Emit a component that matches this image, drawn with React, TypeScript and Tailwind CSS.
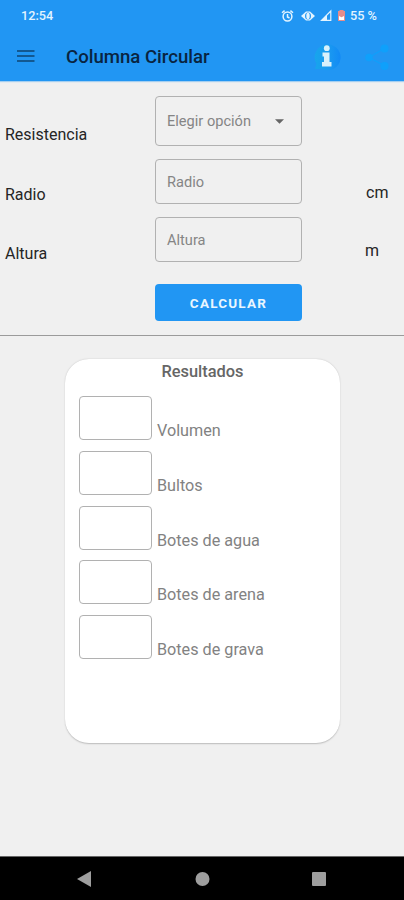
import type { ReactNode } from 'react';

const results = ['Volumen', 'Bultos', 'Botes de agua', 'Botes de arena', 'Botes de grava'];

function StatusIcons() {
    return (
        <svg width="67" height="16" viewBox="0 0 67 16" fill="none" className="text-[#e3f4ff]">
            {/* alarm */}
            <g stroke="currentColor" strokeWidth="1.5">
                <circle cx="6.5" cy="8.5" r="4.4" />
                <path d="M6.5 6v3l2 1M1 4.8l2.6-2.2M12 4.8L9.4 2.6" />
            </g>
            {/* eye */}
            <path d="M20 8l5-4.6h4L34 8l-5 4.6h-4z" fill="currentColor" />
            <ellipse cx="27" cy="8" rx="3" ry="3.6" fill="#2196f3" />
            <ellipse cx="27" cy="8" rx="1.7" ry="3.2" fill="currentColor" />
            {/* signal */}
            <path d="M40.5 12.3L49.8 3v9.3z" stroke="currentColor" strokeWidth="1.2" />
            <path d="M40.5 12.3l5.5-5.5v5.5z" fill="currentColor" />
            {/* battery */}
            <path d="M58.5 2h4v1h1.5v10h-7V3h1.5z" fill="#e58d8c" />
            <path d="M58 8l2.5 1.2L63 8v4h-5z" fill="#fff" />
        </svg>
    );
}

function InfoIcon() {
    return (
        <svg width="28" height="28" viewBox="0 0 28 28">
            <defs>
                <linearGradient id="info" x1="0" x2="1">
                    <stop offset="0" stopColor="#17a5ec" />
                    <stop offset=".5" stopColor="#1b9bf0" />
                    <stop offset="1" stopColor="#128af5" />
                </linearGradient>
            </defs>
            <path d="M2 26l1.5-5A13 13 0 1 1 9 26z" fill="url(#info)" />
            <circle cx="13.8" cy="5.2" r="2.9" fill="#d8f1fb" />
            <path d="M9.5 9.5h7V19h2v4.5H9V19h2v-5.5H9.5z" fill="#d8f1fb" />
        </svg>
    );
}

function ShareIcon() {
    return (
        <svg width="28" height="28" viewBox="0 0 28 28" fill="#0fa0fb">
            <path d="M5 14.5L21 5M5 14.5L21 23" stroke="#0fa0fb" strokeWidth="1.2" />
            <circle cx="5" cy="14.5" r="3.8" />
            <circle cx="20.5" cy="5.5" r="4" />
            <circle cx="20.5" cy="23" r="4" />
        </svg>
    );
}

function Field({ children, className }: { children: ReactNode; className: string }) {
    return (
        <div className={`flex w-[147px] items-center rounded-[4px] border-[1.5px] border-[#b1b1b1] pl-[11px] text-[14.6px] text-[#858585] ${className}`}>
            {children}
        </div>
    );
}

export default function App() {
    return (
        <div className="flex h-[900px] w-[404px] flex-col overflow-hidden bg-[#f0f0f0] font-['Roboto',sans-serif] text-[#252525]">
            <header className="h-[81px] shrink-0 bg-[#2196f3] shadow-[0_1px_1px_#a5cff0]">
                <div className="flex h-8 items-center pl-[21px] text-[12.7px] font-medium text-[#e3f4ff]">
                    <span className="w-[260px]">12:54</span>
                    <StatusIcons />
                    <span className="ml-[2px] whitespace-nowrap">55 %</span>
                </div>
                <div className="flex h-[49px] items-center pl-[17px]">
                    <svg width="18" height="14" viewBox="0 0 18 14" stroke="#125891" strokeWidth="1.8" className="-mt-[2px]">
                        <path d="M0 2h17.5M0 7h17.5M0 12h17.5" />
                    </svg>
                    <h1 className="ml-[31px] w-[247px] pt-[2px] text-[18.6px] font-medium text-[#092440]">Columna Circular</h1>
                    <InfoIcon />
                    <div className="ml-[23px]">
                        <ShareIcon />
                    </div>
                </div>
            </header>

            <main className="flex-1">
                <section className="h-[255px] border-b-[1.5px] border-[#9b9b9b] pt-[15px] text-[16px] leading-5">
                    <div className="flex pl-[5px]">
                        <span className="mt-[29px] w-[150px]">Resistencia</span>
                        <Field className="h-[50px]">
                            <span className="w-[108px]">Elegir opción</span>
                            <svg width="9" height="5" viewBox="0 0 10 5" fill="#666">
                                <path d="M0 0h10L5 5z" />
                            </svg>
                        </Field>
                    </div>
                    <div className="mt-[13px] flex pl-[5px]">
                        <span className="mt-[26px] w-[150px]">Radio</span>
                        <Field className="h-[45px]">Radio</Field>
                        <span className="mt-6 ml-[64px]">cm</span>
                    </div>
                    <div className="mt-[13px] flex pl-[5px]">
                        <span className="mt-[26px] w-[150px]">Altura</span>
                        <Field className="-mt-px h-[45px]">Altura</Field>
                        <span className="mt-[23px] ml-[63px]">m</span>
                    </div>
                    <button className="mt-[20px] ml-[155px] block h-[37px] w-[147px] rounded-[4px] bg-[#2196f3] text-[13.5px] font-bold tracking-[1.2px] text-[#e9f6ff]">
                        CALCULAR
                    </button>
                </section>

                <section className="mt-[23px] ml-[65px] h-[384px] w-[275px] rounded-[24px] bg-white text-[#828282] shadow-[0_0.5px_1.5px_#bbb]">
                    <h2 className="pt-[3px] text-center text-[16.4px] leading-5 font-medium text-[#666]">Resultados</h2>
                    <div className="mt-[14px] flex flex-col gap-[9.8px] pl-[14px]">
                        {results.map((name) => (
                            <div key={name} className="flex h-[45px]">
                                <div className="h-[44px] w-[73px] rounded-[4px] border-[1.5px] border-[#b1b1b1]" />
                                <span className="mt-[25px] ml-[5px] text-[16.2px] leading-5">{name}</span>
                            </div>
                        ))}
                    </div>
                </section>
            </main>

            <nav className="flex h-[44px] shrink-0 items-center border-t border-[#666] bg-black pl-[77px]">
                <svg width="250" height="16" viewBox="0 0 250 16" fill="#9e9e9e">
                    <path d="M0 8L14 0v16z" />
                    <circle cx="125.5" cy="8" r="7" />
                    <rect x="235" y="1" width="14" height="14" rx="1" />
                </svg>
            </nav>
        </div>
    );
}
